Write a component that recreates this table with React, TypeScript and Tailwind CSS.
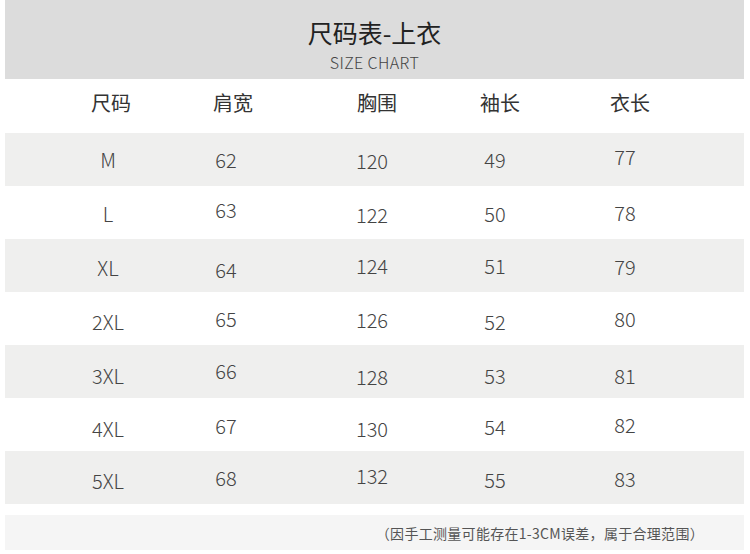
import React from "react";

const dyClass: Record<number, string> = {
  [-4]: "-translate-y-[4px]",
  [-3]: "-translate-y-[3px]",
  [-2]: "-translate-y-[2px]",
  [-1]: "-translate-y-[1px]",
  0: "translate-y-0",
  1: "translate-y-[1px]",
  2: "translate-y-[2px]",
  3: "translate-y-[3px]",
  4: "translate-y-[4px]",
  5: "translate-y-[5px]",
};

type Row = { cells: string[]; dy: number[]; gray: boolean };

const rows: Row[] = [
  { cells: ["M", "62", "120", "49", "77"], dy: [0, 0, 1, 0, -3], gray: true },
  { cells: ["L", "63", "122", "50", "78"], dy: [1, -3, 2, 1, 0], gray: false },
  { cells: ["XL", "64", "124", "51", "79"], dy: [2, 4, 0, 0, 1], gray: true },
  { cells: ["2XL", "65", "126", "52", "80"], dy: [3, 0, 1, 3, 0], gray: false },
  { cells: ["3XL", "66", "128", "53", "81"], dy: [4, -1, 5, 4, 4], gray: true },
  { cells: ["4XL", "67", "130", "54", "82"], dy: [4, 1, 4, 2, 0], gray: false },
  { cells: ["5XL", "68", "132", "55", "83"], dy: [3, 0, -2, 2, 1], gray: true },
];

const headers = ["尺码", "肩宽", "胸围", "袖长", "衣长"];

const gridCols = "grid grid-cols-[120px_114px_178px_66px_194px] pl-[45px]";

export default function App() {
  return (
    <div
      className="w-[750px] h-[554px] bg-white overflow-hidden"
      style={{ fontFamily: '"Noto Sans CJK SC", "Noto Sans", sans-serif' }}
    >
      <div className="mx-[5px] w-[739px] h-[79px] bg-[#dcdcdc] flex flex-col items-center">
        <div className="mt-[15px] text-[25px] leading-[34px] text-[#222]">尺码表-上衣</div>
        <div className="mt-[3px] text-[16px] leading-[20px] text-[#444] font-light tracking-[0.4px]">SIZE CHART</div>
      </div>

      <div className={`mx-[5px] w-[739px] h-[54px] items-center ${gridCols}`}>
        {headers.map((h, i) => (
          <div
            key={h}
            className={`text-center text-[20px] leading-[28px] text-[#333] -translate-y-[3px] ${
              i === 0 ? "translate-x-[1px]" : i === 1 ? "translate-x-[6px]" : i === 2 ? "translate-x-[4px]" : i === 3 ? "translate-x-[5px]" : "translate-x-[5px]"
            }`}
          >
            {h}
          </div>
        ))}
      </div>

      <div className="flex flex-col">
        {rows.map((r, ri) => (
          <div
            key={ri}
            className={`mx-[5px] w-[739px] h-[53px] items-center ${gridCols} ${r.gray ? "bg-[#efefee]" : "bg-white"}`}
          >
            {r.cells.map((c, ci) => (
              <div
                key={ci}
                className={`text-center text-[20px] leading-[28px] font-light text-[#444] ${dyClass[r.dy[ci]]} ${
                  ci === 0 ? "-translate-x-[2px]" : ci === 1 ? "-translate-x-[1px]" : ci === 2 ? "-translate-x-[1px]" : "translate-x-0"
                }`}
              >
                {c}
              </div>
            ))}
          </div>
        ))}
      </div>

      <div className="mx-[5px] mt-[11px] w-[739px] h-[35px] bg-[#f5f5f5] flex items-center justify-end pr-[40px]">
        <span className="text-[14px] leading-[20px] text-[#555] tracking-[0.3px]">（因手工测量可能存在1-3CM误差，属于合理范围）</span>
      </div>
    </div>
  );
}
